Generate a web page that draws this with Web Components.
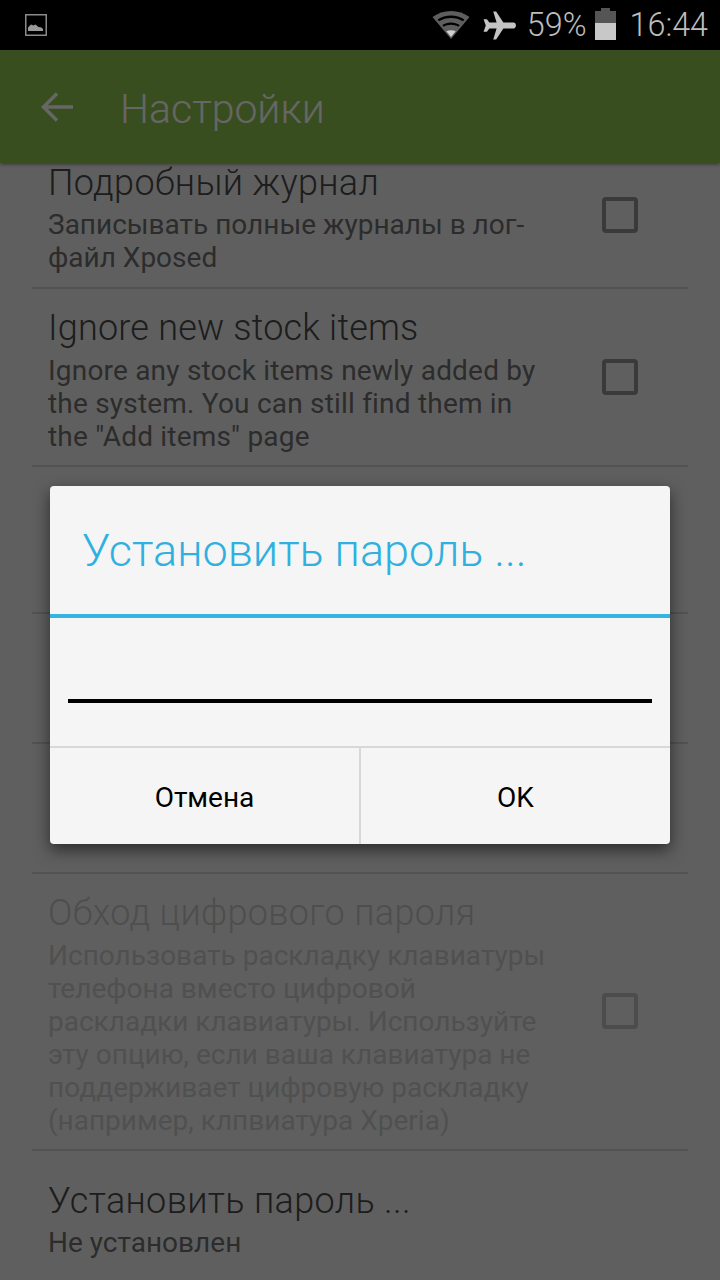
<!doctype html>
<html><head><meta charset="utf-8">
<style>
html,body{margin:0;padding:0;background:#5e5e5e}
body{width:720px;height:1280px;overflow:hidden;position:relative;font-family:Roboto,"Noto Sans",sans-serif}
</style></head><body>
<template id="t-status"><style>
:host{display:flex;align-items:center;height:50px;background:#000;color:#bdbdbd;padding:0 12px 0 25px;box-sizing:border-box;flex:none;position:relative;z-index:3}
.sp{flex:1}
.t{font:300 32.300px Roboto,sans-serif;line-height:50px}
svg{display:block;flex:none}
</style>
<svg width="22" height="22" viewBox="0 0 22 22"><rect x=".75" y=".75" width="20.500" height="20.500" fill="none" stroke="#8a8a8a" stroke-width="1.500"/><path d="M3 17v-3.500l3-3 2.500 1 2-1 3 2.500 3 .5 1.500 1.500V17z" fill="#9a9a9a"/></svg>
<span class="sp"></span>
<svg width="38" height="30" viewBox="0 0 38 30" style="margin-right:13px"><path d="M19 1C12 1 6 3 .5 7L19 29 37.500 7C32 3 26 1 19 1z" fill="#5e5e5e"/><path d="M5.600 9.500C9.500 7 14.100 5.600 19 5.600s9.500 1.400 13.400 3.900l-1.400 1.700C27.500 9.100 23.400 7.900 19 7.900s-8.500 1.200-12 3.300zM10.300 15c2.600-1.500 5.600-2.400 8.700-2.400s6.100.9 8.700 2.400l-1.400 1.700c-2.200-1.200-4.700-1.900-7.300-1.900s-5.100.7-7.300 1.900z" fill="#000"/><path d="M14.300 21.300c1.400-.7 3-1 4.700-1s3.300.3 4.700 1L19 27z" fill="#d0d0d0"/></svg>
<svg width="33" height="29" viewBox="0 0 34 30" style="margin-right:11px"><path d="M10.500 .5h3L21 12h10.500c1.400 0 2.500 1.300 2.500 3s-1.100 3-2.500 3H21l-7.500 11.500h-3L14 18H6.500L4 21.500H.5L2.800 15 .5 8.500H4L6.500 12H14z" fill="#c4c4c4"/></svg>
<span class="t" style="margin-right:8px">59%</span>
<svg width="21" height="32" viewBox="0 0 21 32" style="margin-right:14px;margin-top:-2px"><path d="M6 0h9v3h6v12H0V3h6z" fill="#555"/><rect y="15" width="21" height="17" fill="#c8c8c8"/></svg>
<span class="t">16:44</span>
</template>

<template id="t-appbar"><style>
:host{display:flex;align-items:center;height:113px;background:#8fc24c;color:#fff;flex:none;box-shadow:0 1px 4px rgba(0,0,0,.5);position:relative;z-index:1;padding-left:40px;box-sizing:border-box}
svg{display:block;margin-right:46px}
.t{font:300 41px Roboto,sans-serif;padding-top:4px}
</style>
<svg width="34" height="34" viewBox="0 0 34 34"><path d="M33 17H4M17 3.500 3.500 17 17 30.500" fill="none" stroke="#fff" stroke-width="3.500"/></svg>
<span class="t"><slot></slot></span></template>

<template id="t-row"><style>
:host{display:flex;align-items:center;margin:0 32px;padding:14px 0 13px 16px;border-bottom:2px solid #cdcdcd;box-sizing:border-box;color:#4a4a4a}
:host([disabled]){color:#c2c2c2}
.b{flex:1;min-width:0}
.h{font:300 36px/50px Roboto,sans-serif;letter-spacing:var(--hs,.35px)}
.s{font:400 28px/33px Roboto,sans-serif;color:#6e6e6e;white-space:pre-line;letter-spacing:var(--ss,0);padding-top:var(--st,0)}
:host([disabled]) .s{color:#c8c8c8}
.c{flex:none;width:36px;height:36px;border:4px solid #929292;border-radius:4px;box-sizing:border-box;margin:-2px 50px 0 0}
:host([disabled]) .c{border-color:#bebebe}
:host([nocheck]) .c{display:none}
</style>
<div class="b"><div class="h"><slot name="h"></slot></div><div class="s"><slot name="s"></slot></div></div><div class="c"></div></template>

<template id="t-dialog"><style>
:host{position:absolute;left:50px;top:486px;width:620px;height:358px;background:#f5f5f5;border-radius:4px;box-shadow:0 6px 16px rgba(0,0,0,.55);display:flex;flex-direction:column;z-index:4}
.title{height:128px;flex:none;box-sizing:border-box;padding:35px 0 0 32px;font:300 45px/60px Roboto,sans-serif;color:#2fb0e0}
.rule{height:4px;background:#35b3e2;flex:none}
.body{flex:1;padding:0 18px;display:flex;flex-direction:column}
.in{margin-top:81px;height:4px;background:#000}
.btns{display:flex;height:98px;flex:none;border-top:2px solid #d8d8d8;box-sizing:border-box;font:400 28px Roboto,sans-serif;color:#000}
.btns div{flex:1;display:flex;align-items:center;justify-content:center;padding-top:3px}
.btns div+div{border-left:2px solid #d8d8d8}
</style>
<div class="title"><slot name="title"></slot></div><div class="rule"></div><div class="body"><div class="in"></div></div>
<div class="btns"><div><slot name="no"></slot></div><div><slot name="ok"></slot></div></div></template>

<template id="t-scrim"><style>:host{position:absolute;inset:0;background:rgba(0,0,0,.6);z-index:2;display:block}</style></template>

<template id="t-screen"><style>
:host{display:flex;flex-direction:column;width:720px;height:1280px;background:#eee;overflow:hidden;position:relative}
.list{flex:1;overflow:hidden;min-height:0}
.in{margin-top:-19px}
</style><slot name="status"></slot><slot name="bar"></slot><div class="list"><div class="in"><slot></slot></div></div><slot name="over"></slot></template>

<x-screen>
<x-status slot="status"></x-status>
<x-appbar slot="bar">Настройки</x-appbar>
<x-row style="height:145px"><span slot="h">Подробный журнал</span><span slot="s">Записывать полные журналы в лог-
файл Xposed</span></x-row>
<x-row style="height:178px;--hs:.2px;--ss:.2px;--st:1px"><span slot="h">Ignore new stock items</span><span slot="s">Ignore any stock items newly added by
the system. You can still find them in
the "Add items" page</span></x-row>
<x-row nocheck style="height:147px"></x-row>
<x-row nocheck style="height:130px"></x-row>
<x-row nocheck style="height:130px"></x-row>
<x-row disabled style="height:277px;--st:1px"><span slot="h">Обход цифрового пароля</span><span slot="s">Использовать раскладку клавиатуры
телефона вместо цифровой
раскладки клавиатуры. Используйте
эту опцию, если ваша клавиатура не
поддерживает цифровую раскладку
(например, клпвиатура Xperia)</span></x-row>
<x-row nocheck style="height:129px;border:0;padding-top:16px"><span slot="h">Установить пароль ...</span><span slot="s">Не установлен</span></x-row>
<x-scrim slot="over"></x-scrim>
<x-dialog slot="over"><span slot="title">Установить пароль ...</span><span slot="no">Отмена</span><span slot="ok">OK</span></x-dialog>
</x-screen>
<script>
for (const n of ['status','appbar','row','dialog','scrim','screen']) {
  const t=document.getElementById('t-'+n);
  customElements.define('x-'+n,class extends HTMLElement{constructor(){super();this.attachShadow({mode:'open'}).appendChild(t.content.cloneNode(true));}});
}
</script>
</body></html>
